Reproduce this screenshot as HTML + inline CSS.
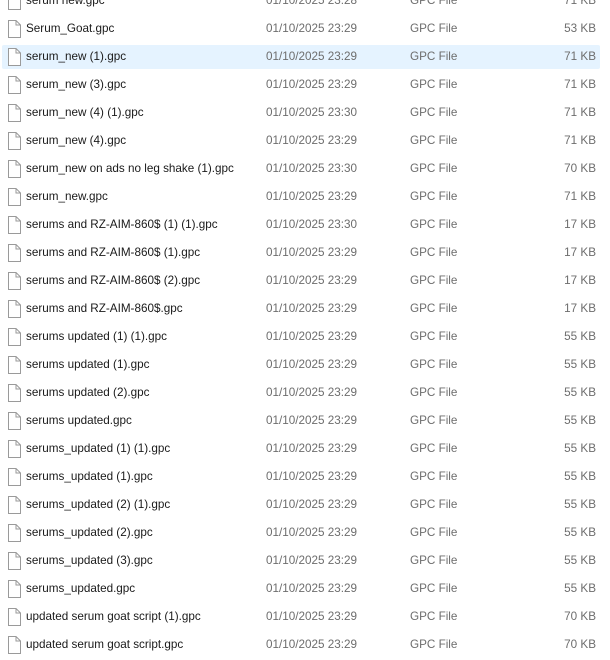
<!DOCTYPE html>
<html><head><style>
body{margin:0;width:610px;height:660px;background:#fff;overflow:hidden;font-family:"Liberation Sans",sans-serif;font-size:11.7px;position:relative}
.r{position:absolute;left:2px;width:598px;height:24px;line-height:24px}
.r.h{background:#e5f3ff;border-radius:2px}
.r svg{position:absolute;left:5px;top:3px}
.n{position:absolute;left:24px;color:#1a1a1a}
.d{position:absolute;left:264px;color:#6d6d6d}
.t{position:absolute;left:408px;color:#6d6d6d}
.s{position:absolute;right:4px;color:#6d6d6d}
</style></head><body>
<script>
var rows=[["serum new.gpc","23:28","71 KB"],["Serum_Goat.gpc","23:29","53 KB"],["serum_new (1).gpc","23:29","71 KB"],["serum_new (3).gpc","23:29","71 KB"],["serum_new (4) (1).gpc","23:30","71 KB"],["serum_new (4).gpc","23:29","71 KB"],["serum_new on ads no leg shake (1).gpc","23:30","70 KB"],["serum_new.gpc","23:29","71 KB"],["serums and RZ-AIM-860$ (1) (1).gpc","23:30","17 KB"],["serums and RZ-AIM-860$ (1).gpc","23:29","17 KB"],["serums and RZ-AIM-860$ (2).gpc","23:29","17 KB"],["serums and RZ-AIM-860$.gpc","23:29","17 KB"],["serums updated (1) (1).gpc","23:29","55 KB"],["serums updated (1).gpc","23:29","55 KB"],["serums updated (2).gpc","23:29","55 KB"],["serums updated.gpc","23:29","55 KB"],["serums_updated (1) (1).gpc","23:29","55 KB"],["serums_updated (1).gpc","23:29","55 KB"],["serums_updated (2) (1).gpc","23:29","55 KB"],["serums_updated (2).gpc","23:29","55 KB"],["serums_updated (3).gpc","23:29","55 KB"],["serums_updated.gpc","23:29","55 KB"],["updated serum goat script (1).gpc","23:29","70 KB"],["updated serum goat script.gpc","23:29","70 KB"]];
var ic='<svg width="14" height="18" viewBox="0 0 14 18"><path d="M1.5 0.5H9L13.5 5V17.5H1.5Z" fill="#fff" stroke="#9a9a9a"/><path d="M9 0.5V5H13.5" fill="none" stroke="#9a9a9a"/></svg>';
rows.forEach(function(r,i){var y=-11+28*i;document.write('<div class="r'+(i==2?' h':'')+'" style="top:'+y+'px">'+ic+'<span class="n">'+r[0]+'</span><span class="d">01/10/2025 '+r[1]+'</span><span class="t">GPC File</span><span class="s">'+r[2]+'</span></div>');});
</script>
</body></html>
